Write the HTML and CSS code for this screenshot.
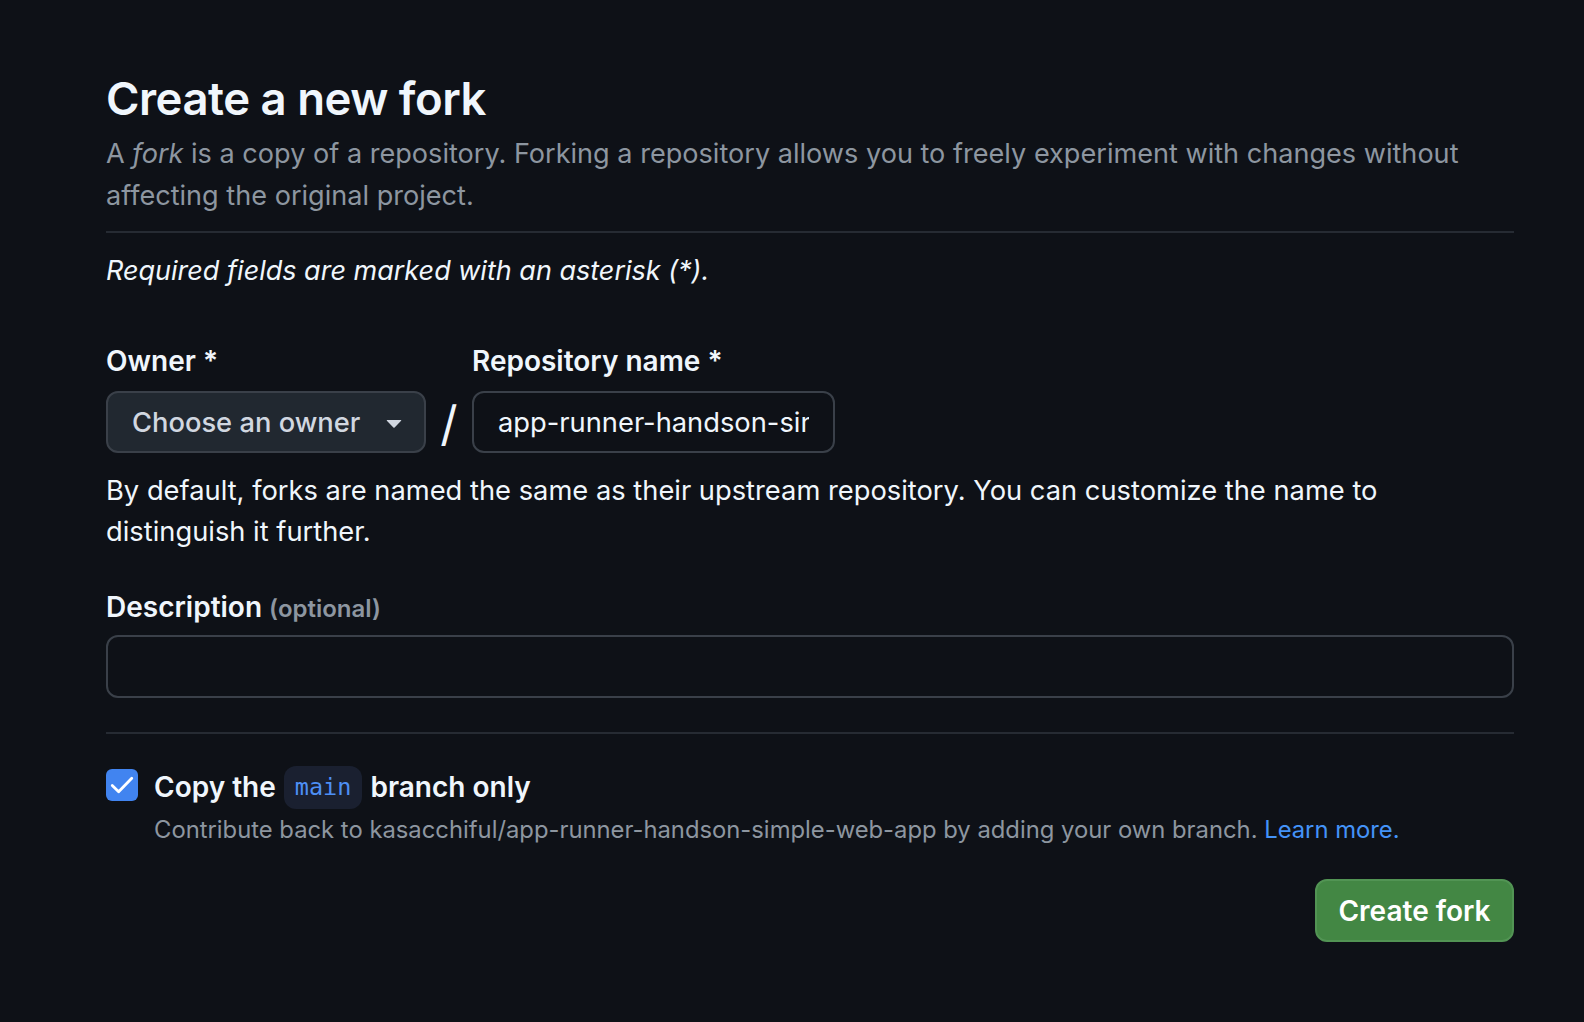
FILE: index.html
```html
<!DOCTYPE html>
<html lang="en">
<head>
<meta charset="utf-8">
<title>Create a new fork</title>
<link rel="stylesheet" href="styles.css">
</head>
<body>
<main class="page">
  <div class="subhead">
    <h1 class="subhead-title">Create a new fork</h1>
    <p class="subhead-desc">A <em>fork</em> is a copy of a repository. Forking a repository allows you to freely experiment with changes without affecting the original project.</p>
  </div>
  <p class="required-note">Required fields are marked with an asterisk (*).</p>

  <div class="name-row">
    <div class="field">
      <label class="label">Owner *</label>
      <button class="select" type="button">
        <span>Choose an owner</span>
        <svg class="caret" viewBox="0 0 16 16" width="32" height="32" aria-hidden="true"><path d="m4.427 7.427 3.396 3.396a.25.25 0 0 0 .354 0l3.396-3.396A.25.25 0 0 0 11.396 7H4.604a.25.25 0 0 0-.177.427Z"/></svg>
      </button>
    </div>
    <span class="slash">/</span>
    <div class="field">
      <label class="label" for="repo">Repository name *</label>
      <input id="repo" class="input repo-input" type="text" value="app-runner-handson-simple-web-app">
    </div>
  </div>
  <p class="note">By default, forks are named the same as their upstream repository. You can customize the name to distinguish it further.</p>

  <div class="field desc-field">
    <label class="label" for="desc">Description <span class="optional">(optional)</span></label>
    <input id="desc" class="input desc-input" type="text">
  </div>

  <hr class="divider">

  <div class="check-row">
    <span class="checkbox">
      <svg viewBox="0 0 16 16" width="30" height="30" aria-hidden="true"><path d="M2.8 8.3 6.2 11.6 13.2 4.4" fill="none" stroke="#fff" stroke-width="1.5" stroke-linecap="round" stroke-linejoin="round"/></svg>
    </span>
    <div class="check-body">
      <div class="check-label">Copy the <code class="branch">main</code> branch only</div>
      <div class="check-help">Contribute back to kasacchiful/app-runner-handson-simple-web-app by adding your own branch. <a class="link" href="#">Learn more.</a></div>
    </div>
  </div>

  <div class="actions">
    <button class="btn-primary" type="button">Create fork</button>
  </div>
</main>
</body>
</html>
```

FILE: styles.css
```css
* { box-sizing: border-box; }

html, body {
  margin: 0;
  padding: 0;
  background: #0e1117;
}

body {
  font-family: Inter, "Noto Sans", "Liberation Sans", sans-serif;
  color: #f0f6fc;
  font-size: 27.3px;
  line-height: 42px;
}

.page {
  width: 1408px;
  margin-left: 106px;
  padding-top: 69px;
  padding-bottom: 60px;
}

.subhead {
  border-bottom: 2px solid #262b33;
  padding-bottom: 14px;
}

.subhead-title {
  margin: 0;
  font-size: 45.5px;
  line-height: 60px;
  font-weight: 600;
  letter-spacing: -0.5px;
  color: #f0f6fc;
}

.subhead-desc {
  margin: 4px 0 0;
  color: #8d96a0;
  font-size: 27.1px;
  line-height: 42px;
}

.subhead-desc em { font-style: italic; }

.required-note {
  margin: 17px 0 0;
  font-style: italic;
  font-size: 27px;
  line-height: 42px;
}

.name-row {
  display: flex;
  align-items: flex-end;
  margin-top: 48px;
}

.field {
  display: flex;
  flex-direction: column;
}

.label {
  font-weight: 600;
  font-size: 28px;
  line-height: 42px;
  margin-bottom: 9px;
}

.select {
  width: 320px;
  height: 62px;
  display: flex;
  align-items: center;
  justify-content: space-between;
  padding: 0 14px 0 24px;
  background: #212830;
  border: 2px solid #3a4049;
  border-radius: 12px;
  color: #d1d7e0;
  font-family: inherit;
  font-size: 27.3px;
  font-weight: 500;
}

.caret { fill: #d1d7e0; }

.slash {
  width: 46px;
  height: 62px;
  display: flex;
  align-items: center;
  justify-content: center;
  font-size: 48px;
  font-weight: 400;
  color: #f0f6fc;
  padding-top: 4px;
}

.input {
  height: 62px;
  background: #0e1117;
  border: 2px solid #3a4049;
  border-radius: 12px;
  color: #f0f6fc;
  font-family: inherit;
  font-size: 27.3px;
  padding: 0 24px;
  outline: none;
}

.repo-input { width: 363px; }

.note {
  margin: 17px 0 0;
  line-height: 41px;
}

.desc-field { margin-top: 34px; }

.desc-field .label { margin-bottom: 5px; }

.optional {
  color: #8d96a0;
  font-size: 24px;
  font-weight: 600;
}

.desc-input {
  width: 100%;
  height: 63px;
}

.divider {
  margin: 34px 0 0;
  border: 0;
  border-top: 2px solid #262b33;
  height: 0;
}

.check-row {
  display: flex;
  align-items: flex-start;
  gap: 16px;
  margin-top: 32px;
}

.checkbox {
  flex: none;
  width: 32px;
  height: 32px;
  margin-top: 3px;
  border-radius: 6px;
  background: #4184f0;
  display: flex;
  align-items: center;
  justify-content: center;
}

.check-body {
  display: flex;
  flex-direction: column;
}

.check-label {
  font-weight: 600;
  font-size: 28px;
  line-height: 43px;
  display: flex;
  align-items: center;
  gap: 8px;
}

.branch {
  font-family: "DejaVu Sans Mono", "Liberation Mono", monospace;
  font-size: 23.5px;
  font-weight: 400;
  color: #4d8ff5;
  background: #1a2030;
  border-radius: 12px;
  padding: 0 11px;
  line-height: 43px;
}

.check-help {
  color: #8d96a0;
  font-size: 23.8px;
  line-height: 36px;
  margin-top: 3px;
}

.link {
  color: #4493f8;
  text-decoration: none;
}

.actions {
  display: flex;
  justify-content: flex-end;
  margin-top: 31px;
}

.btn-primary {
  width: 199px;
  height: 63px;
  background: #438744;
  border: 2px solid #529454;
  border-radius: 12px;
  color: #ffffff;
  font-family: inherit;
  font-size: 28px;
  font-weight: 600;
}
```
